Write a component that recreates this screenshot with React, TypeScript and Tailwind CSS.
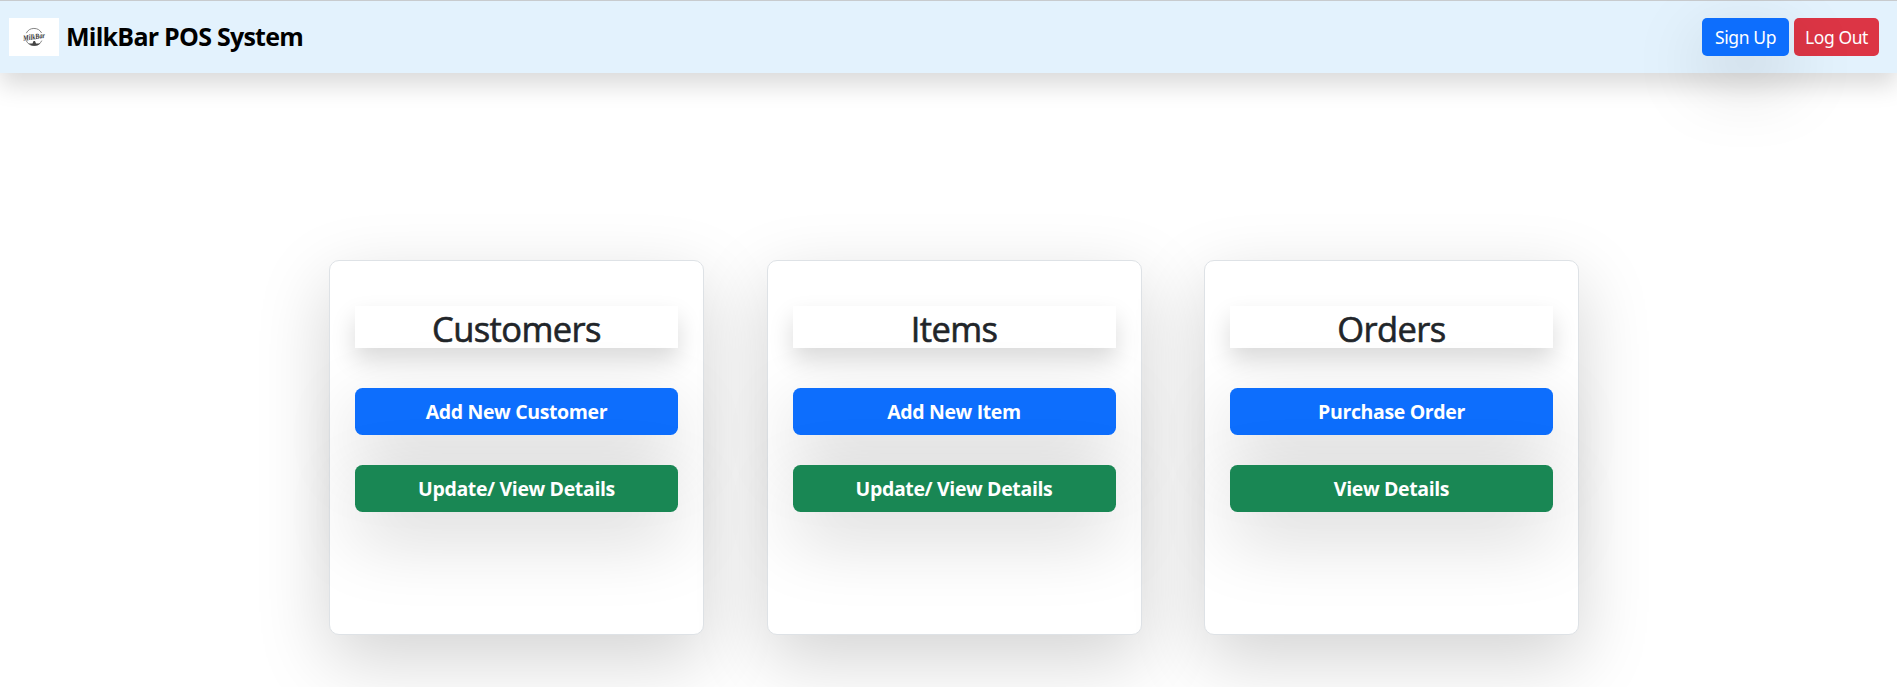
function Logo() {
  return (
    <svg width="50" height="38" viewBox="0 0 50 38" className="block bg-white" aria-label="MilkBar">
      <g fill="none" stroke="#777" strokeWidth="0.9">
        <path d="M17.3 15.2A8.6 8.6 0 0 1 32.6 15" />
        <path d="M17.2 22.6A8.6 8.6 0 0 0 32.8 22.6" />
      </g>
      <text x="25" y="21.4" textAnchor="middle" textLength="22" lengthAdjust="spacingAndGlyphs" transform="rotate(-8 25 19)" className="fill-[#333] font-['Liberation_Serif',serif] text-[8px] font-bold italic">
        MilkBar
      </text>
      <path d="M19.5 25.5h4l1-2.5h1.5l1 2.5h4.5q-2.5 2.3-6 2.3T19.5 25.5z" fill="#444" />
    </svg>
  );
}

const cards = [
  { title: "Customers", primary: "Add New Customer", secondary: "Update/ View Details" },
  { title: "Items", primary: "Add New Item", secondary: "Update/ View Details" },
  { title: "Orders", primary: "Purchase Order", secondary: "View Details" },
];

const action =
  "block h-[47px] w-full rounded-[7.5px] text-[19.5px] leading-[48px] font-bold tracking-[-0.36px] text-white shadow-[0_24px_72px_rgba(0,0,0,0.175)]";

function Card({ title, primary, secondary }: (typeof cards)[number]) {
  return (
    <section className="h-[375px] w-[375px] shrink-0 rounded-[10px] border border-[#dee2e6] bg-white px-[25px] pt-[45px] text-center shadow-[0_24px_72px_rgba(0,0,0,0.175)]">
      <h2 className="h-[42px] bg-white text-[34.5px] leading-[46px] font-medium tracking-[-0.6px] text-[#212529] shadow-[0_12px_24px_rgba(0,0,0,0.15)] [-webkit-text-stroke:0.6px_#212529]">
        {title}
      </h2>
      <button className={`${action} mt-10 bg-[#0d6efd]`}>{primary}</button>
      <button className={`${action} mt-[30px] bg-[#198754]`}>{secondary}</button>
    </section>
  );
}

export default function App() {
  return (
    <div className="h-[687px] overflow-hidden bg-white font-['Open_Sans',sans-serif]">
      <header className="flex h-[73px] items-center border-t border-[#c8cbce] bg-[#e3f2fd] pr-[18px] pl-[9px] shadow-[0_12px_24px_rgba(0,0,0,0.15)]">
        <Logo />
        <span className="ml-[7px] text-[25px] font-bold tracking-[-0.75px] text-black">MilkBar POS System</span>
        <div className="ml-auto flex gap-[5px] font-['Noto_Sans',sans-serif] text-[17.5px] tracking-[-0.4px] text-white">
          <button className="relative z-10 h-[38px] w-[87px] rounded-[5px] bg-[#0d6efd] shadow-[0_24px_72px_rgba(0,0,0,0.175)]">Sign Up</button>
          <button className="h-[38px] w-[85px] rounded-[5px] bg-[#dc3545]">Log Out</button>
        </div>
      </header>
      <main className="flex gap-[62.5px] pt-[187px] pl-[329px]">
        {cards.map((card) => (
          <Card key={card.title} {...card} />
        ))}
      </main>
    </div>
  );
}
